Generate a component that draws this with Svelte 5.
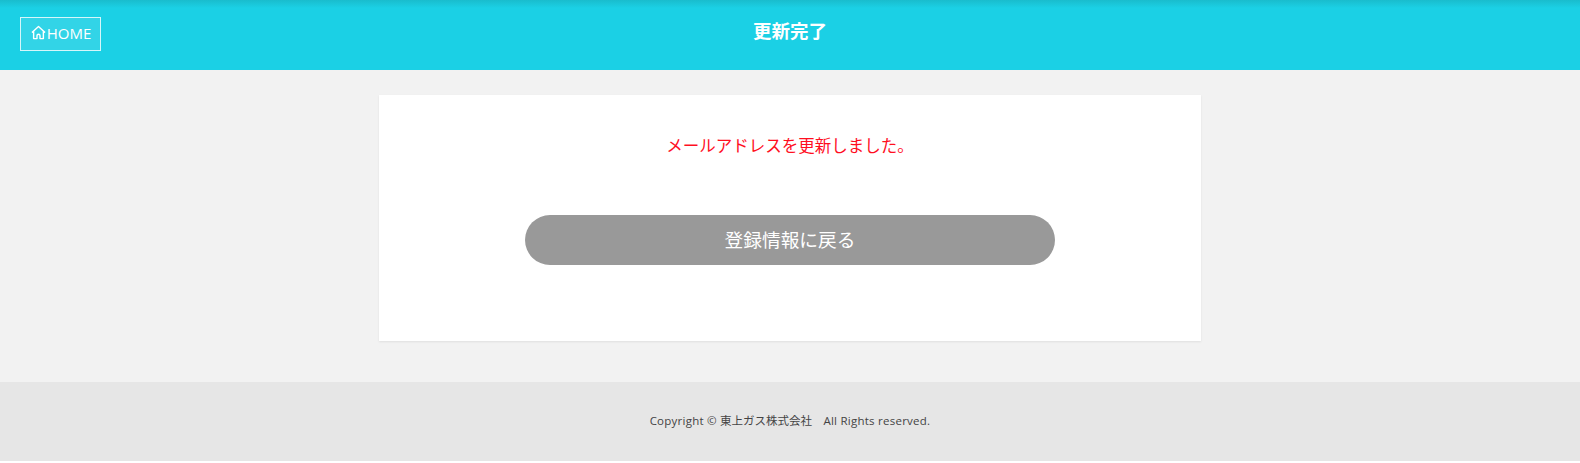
<script>
  const title = '更新完了';
</script>

<div class="page">
  <header class="head">
    <a class="home" href="#home">
      <svg viewBox="0 0 16 16" width="15" height="15" fill="none" stroke="currentColor" stroke-width="1.5" aria-hidden="true">
        <path d="M1 8 8 1.5 15 8M2.8 7v7.5h3.6v-3a1.6 1.6 0 0 1 3.2 0v3h3.6V7" stroke-linejoin="round" />
      </svg>
      <span>HOME</span>
    </a>
    <h1>{title}</h1>
  </header>
  <main class="main">
    <section class="card">
      <p class="msg">メールアドレスを更新しました。</p>
      <a class="back" href="#back"><span>登録情報に戻る</span></a>
    </section>
  </main>
  <footer class="foot"><span class="latin">Copyright ©</span> 東上ガス株式会社　<span class="latin">All Rights reserved.</span></footer>
</div>

<style>
  :global(body) {
    margin: 0;
    background: #fff;
  }
  .page {
    display: flex;
    flex-direction: column;
    font-family: "Open Sans", "Noto Sans CJK JP", sans-serif;
  }
  .head {
    height: 70px;
    box-sizing: border-box;
    background: linear-gradient(#19bccd 0, #1bd0e5 8px);
    display: flex;
    align-items: center;
    justify-content: center;
    position: relative;
    color: #fff;
  }
  .home {
    position: absolute;
    left: 20px;
    top: 17px;
    width: 81px;
    height: 34px;
    box-sizing: border-box;
    border: 1px solid #d5f6fa;
    background: rgba(255, 255, 255, 0.1);
    color: #fff;
    text-decoration: none;
    font-size: 15px;
    line-height: 20px;
    padding-bottom: 3px;
    padding-left: 1px;
    display: flex;
    align-items: center;
    justify-content: center;
    gap: 1px;
  }
  h1 {
    margin: 0 0 10px;
    font-size: 18.5px;
    font-weight: 700;
  }
  .main {
    background: #f2f2f2;
    height: 312px;
    box-sizing: border-box;
    padding-top: 25px;
  }
  .card {
    width: 822px;
    height: 246px;
    margin: 0 auto;
    box-sizing: border-box;
    background: #fff;
    box-shadow: 0 1px 2px rgba(0, 0, 0, 0.08);
    padding-top: 38px;
    display: flex;
    flex-direction: column;
    align-items: center;
  }
  .msg {
    margin: 0;
    color: #ff0f1f;
    font-size: 16.5px;
    line-height: 26px;
  }
  .back {
    margin-top: 56px;
    width: 530px;
    height: 50px;
    border-radius: 25px;
    background: #999;
    color: #fff;
    text-decoration: none;
    font-size: 18.7px;
    padding-bottom: 4px;
    box-sizing: border-box;
    display: flex;
    align-items: center;
    justify-content: center;
  }
  .foot {
    height: 79px;
    box-sizing: border-box;
    background: #e6e6e6;
    color: #444;
    font-size: 11.5px;
    text-align: center;
    padding-top: 31px;
    line-height: 16px;
  }
  .latin {
    letter-spacing: 0.25px;
  }
</style>
